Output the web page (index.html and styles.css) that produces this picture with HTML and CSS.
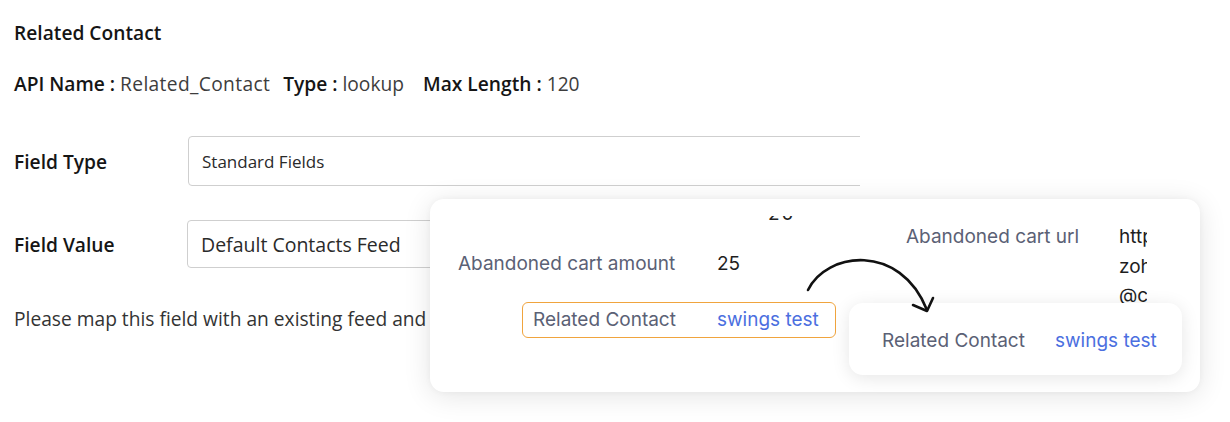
FILE: index.html
```html
<!DOCTYPE html>
<html>
<head>
<meta charset="utf-8">
<link rel="stylesheet" href="styles.css">
</head>
<body>
<div class="page">
  <div class="panel">
    <div class="title">Related Contact</div>
    <div class="meta">
      <b>API Name :</b> <span class="val1">Related_Contact</span> <b class="gap">Type :</b> lookup <b class="gap2">Max Length :</b> 120
    </div>
    <div class="row row-type">
      <div class="label">Field Type</div>
      <div class="box box-type">Standard Fields</div>
    </div>
    <div class="row row-value">
      <div class="label">Field Value</div>
      <div class="box box-value">Default Contacts Feed</div>
    </div>
    <div class="hint">Please map this field with an existing feed and</div>
  </div>

  <div class="card">
    <div class="col col-left">
      <div class="clip"><span>20</span></div>
      <div class="kv kv-amount">
        <span class="k">Abandoned cart amount</span>
        <span class="v">25</span>
      </div>
      <div class="kv kv-hl">
        <span class="k">Related Contact</span>
        <span class="v link">swings test</span>
      </div>
    </div>
    <div class="col col-right">
      <div class="kv kv-url">
        <span class="k">Abandoned cart url</span>
        <span class="v url">https://<br>zoho<br>@co</span>
      </div>
    </div>
  </div>

  <div class="mini">
    <span class="k">Related Contact</span>
    <span class="v link">swings test</span>
  </div>

  <svg class="arrow" width="140" height="70" viewBox="800 250 140 70" fill="none" stroke="#111" stroke-width="2.6" stroke-linecap="round" stroke-linejoin="round">
    <path d="M808 290 C 826 252, 900 242, 927 310"/>
    <path d="M913 305 L927 311 L933 298"/>
  </svg>
</div>
</body>
</html>
```

FILE: styles.css
```css
* { box-sizing: border-box; }
html, body { margin: 0; padding: 0; background: #fff; }
body { width: 1230px; height: 422px; overflow: hidden; font-family: "Open Sans", Lato, sans-serif; color: #1a1a1a; }
.page { position: relative; width: 1230px; height: 422px; }

.panel { width: 860px; overflow: hidden; padding-left: 14px; padding-top: 21px; }
.title { font-size: 19.2px; font-weight: 600; line-height: 24px; color: #151515; }
.meta { margin-top: 27px; font-size: 19.2px; line-height: 24px; color: #3d3d3d; white-space: nowrap; }
.meta b { color: #151515; font-weight: 600; }
.meta .val1 { letter-spacing: 0.35px; }
.meta .gap { margin-left: 8px; }
.meta .gap2 { margin-left: 14px; }

.row { display: flex; align-items: center; white-space: nowrap; }
.label { width: 174px; font-size: 19.2px; font-weight: 600; color: #151515; flex: none; }
.row-type { margin-top: 40px; }
.row-value { margin-top: 34px; }
.row-value .label { width: 173px; }
.box { flex: none; width: 720px; border: 1px solid #cfcfcf; border-radius: 4px; display: flex; align-items: center; color: #2a2a2a; }
.box-type { height: 50px; padding-left: 13px; font-size: 17px; }
.box-value { height: 48px; padding-left: 13px; font-size: 19.5px; }
.hint { margin-top: 39px; font-size: 19.2px; line-height: 24px; color: #333; white-space: nowrap; }

.card {
  position: absolute; left: 430px; top: 199px; width: 770px; height: 193px;
  background: #fff; border-radius: 14px;
  box-shadow: 0 4px 28px rgba(0,0,0,0.11), 0 0 6px rgba(0,0,0,0.04);
  display: flex; overflow: hidden;
  font-family: Inter, "Noto Sans", sans-serif;
}
.col { display: flex; flex-direction: column; }
.col-left { width: 476px; padding-top: 17px; }
.col-right { padding-top: 26px; }
.k { color: #5b6175; font-size: 19px; }
.v { color: #1e1e1e; font-size: 19px; }
.link { color: #4b6fe0; }

.clip { height: 5px; overflow: hidden; position: relative; margin-left: 338px; }
.clip span { position: absolute; top: -12px; line-height: 20px; font-size: 19px; color: #222; letter-spacing: 2px; }

.kv { display: flex; line-height: 24px; white-space: nowrap; }
.kv-amount { margin-top: 31px; padding-left: 28px; }
.kv-amount .k { width: 259px; }
.kv-hl { margin-top: 26px; margin-left: 92px; width: 314px; height: 36px; align-items: center;
  border: 1.5px solid #f0a43e; border-radius: 6px; padding-left: 10px; }
.kv-hl .k { width: 184px; }

.kv-url .k { width: 213px; }
.url { width: 28px; overflow: hidden; line-height: 29.5px; margin-top: -3px; }

.arrow { position: absolute; left: 800px; top: 250px; }

.mini {
  position: absolute; left: 849px; top: 303px; width: 333px; height: 72px;
  background: #fff; border-radius: 14px;
  box-shadow: 0 3px 18px rgba(0,0,0,0.10);
  display: flex; align-items: center; padding-left: 33px; white-space: nowrap;
  font-family: Inter, "Noto Sans", sans-serif; padding-top: 2px;
}
.mini .k { width: 173px; }
```
